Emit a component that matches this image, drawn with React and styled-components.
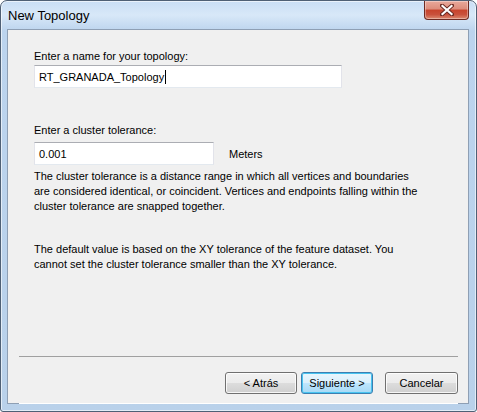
import React from "react";
import styled, { createGlobalStyle } from "styled-components";

const Global = createGlobalStyle`
  html, body { margin: 0; padding: 0; background: #ffffff; }
  body { font-family: "Liberation Sans", Arial, sans-serif; }
`;

const Window = styled.div`
  position: relative;
  width: 477px;
  height: 412px;
  box-sizing: border-box;
  border: 1px solid #4f6075;
  border-radius: 7px 7px 3px 3px;
  background: linear-gradient(180deg, #c9def5 0px, #d8e8f8 14px, #bcd4ee 30px, #b9d1ea 100%);
  box-shadow: inset 0 0 0 1px rgba(255,255,255,0.6);
  display: flex;
  flex-direction: column;
  overflow: hidden;
`;

const TitleBar = styled.div`
  height: 28px;
  display: flex;
  align-items: flex-start;
  padding-left: 7px;
`;

const Title = styled.div`
  font-family: "Liberation Sans", Arial, sans-serif;
  font-size: 13px;
  color: #000;
  margin-top: 7px;
`;

const CloseButton = styled.div`
  margin-left: auto;
  margin-right: 7px;
  width: 43px;
  height: 18px;
  border: 1px solid #6d2a22;
  border-top: none;
  border-radius: 0 0 4px 4px;
  background: linear-gradient(180deg, #e9a99b 0%, #dd8c7b 45%, #c7432c 50%, #c9513c 75%, #dc8a70 100%);
  box-shadow: inset 0 0 0 1px rgba(255,255,255,0.35);
  display: flex;
  align-items: center;
  justify-content: center;
`;

const Client = styled.div`
  flex: 1;
  margin: 0 7px 7px 6px;
  border: 1px solid #8e9fb4;
  background: #f0f0f0;
  display: flex;
  flex-direction: column;
  font-size: 11px;
  color: #000;
`;

const Content = styled.div`
  flex: 1;
  padding: 20px 0 0 26px;
  display: flex;
  flex-direction: column;
`;

const Label = styled.div`
  line-height: 13px;
  margin-bottom: ${p => p.$mb ?? 3}px;
  margin-top: ${p => p.$mt || 0}px;
`;

const Row = styled.div`
  display: flex;
  align-items: center;
  gap: 15px;
`;

const TextBox = styled.div`
  box-sizing: border-box;
  width: ${p => p.$w}px;
  height: 23px;
  background: #fff;
  border: 1px solid #e2e3ea;
  border-top-color: #abadb3;
  border-bottom-color: #e3e9ef;
  display: flex;
  align-items: center;
  padding-left: 4px;
  font-size: 11px;
`;

const Caret = styled.span`
  display: inline-block;
  width: 1px;
  height: 14px;
  background: #000;
  margin-left: 1px;
`;

const Para = styled.p`
  margin: ${p => p.$mt || 0}px 0 0 0;
  line-height: 15px;
  white-space: nowrap;
`;

const Footer = styled.div`
  margin: 0 10px 0 11px;
  border-top: 1px solid #a0a0a0;
  box-shadow: 0 1px 0 #ffffff;
  height: 47px;
  display: flex;
  align-items: flex-start;
  justify-content: flex-end;
  padding-top: 15px;
  box-sizing: border-box;
`;

const Button = styled.button`
  box-sizing: border-box;
  width: ${p => p.$w}px;
  height: 22px;
  margin-left: ${p => p.$ml || 0}px;
  font-family: "Liberation Sans", Arial, sans-serif;
  font-size: 11px;
  color: #000;
  border-radius: 3px;
  border: 1px solid ${p => (p.$default ? "#3c7fb1" : "#707070")};
  background: ${p =>
    p.$default
      ? "linear-gradient(180deg, #eaf6fd 0%, #d9f0fc 50%, #bee6fd 50%, #a7d9f5 100%)"
      : "linear-gradient(180deg, #f2f2f2 0%, #ebebeb 50%, #dddddd 50%, #cfcfcf 100%)"};
  box-shadow: inset 0 0 0 1px ${p => (p.$default ? "#48c4f0" : "rgba(255,255,255,0.8)")};
  padding: 0;
`;

function CloseGlyph() {
  return (
    <svg width="14" height="12" viewBox="0 0 14 12">
      <path d="M2 1.5 L12 10.5 M12 1.5 L2 10.5" stroke="#6a2a22" strokeWidth="4" strokeLinecap="square" />
      <path d="M2.5 2 L11.5 10 M11.5 2 L2.5 10" stroke="#ffffff" strokeWidth="2.2" strokeLinecap="square" />
    </svg>
  );
}

export default function App() {
  return (
    <>
      <Global />
      <Window>
        <TitleBar>
          <Title>New Topology</Title>
          <CloseButton>
            <CloseGlyph />
          </CloseButton>
        </TitleBar>
        <Client>
          <Content>
            <Label $mb={2}>Enter a name for your topology:</Label>
            <TextBox $w={308}>
              RT_GRANADA_Topology<Caret />
            </TextBox>
            <Label $mt={36} $mb={5}>Enter a cluster tolerance:</Label>
            <Row>
              <TextBox $w={180}>0.001</TextBox>
              <span>Meters</span>
            </Row>
            <Para $mt={4}>
              The cluster tolerance is a distance range in which all vertices and boundaries<br />
              are considered identical, or coincident. Vertices and endpoints falling within the<br />
              cluster tolerance are snapped together.
            </Para>
            <Para $mt={28}>
              The default value is based on the XY tolerance of the feature dataset. You<br />
              cannot set the cluster tolerance smaller than the XY tolerance.
            </Para>
          </Content>
          <Footer>
            <Button $w={72}>&lt; Atrás</Button>
            <Button $w={72} $ml={4} $default>Siguiente &gt;</Button>
            <Button $w={73} $ml={12}>Cancelar</Button>
          </Footer>
        </Client>
      </Window>
    </>
  );
}
